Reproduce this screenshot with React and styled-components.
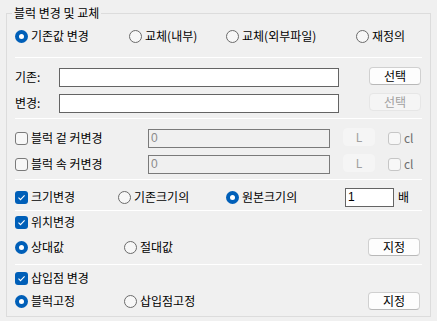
import React from 'react';
import styled, { createGlobalStyle } from 'styled-components';

const GlobalStyle = createGlobalStyle`
  body {
    margin: 0;
    background: #f0f0f0;
    font-family: "Noto Sans CJK KR", "Noto Sans", sans-serif;
    font-size: 12px;
    line-height: 16px;
    color: #000;
  }
`;

const Group = styled.fieldset`
  margin: 5px 6px 0;
  padding: 5px 8px 5px;
  border: 1px solid #dcdcdc;
  min-width: 0;
`;

const Title = styled.legend`
  padding: 0 2px;
  margin-left: -3px;
  line-height: 16px;
`;

const Row = styled.div`
  display: flex;
  align-items: center;
  height: 20px;
  margin-top: ${(p) => p.$mt || 0}px;
`;

const Sep = styled.div`
  height: 1px;
  background: #ffffff;
  margin-top: ${(p) => p.$mt || 0}px;
`;

const Cell = styled.div`
  display: flex;
  align-items: center;
  flex-shrink: 0;
  width: ${(p) => (p.$w ? `${p.$w}px` : 'auto')};
  margin-left: ${(p) => p.$ml || 0}px;
  white-space: nowrap;
`;

const Spacer = styled.div`
  flex: 1;
`;

const Circle = styled.span`
  box-sizing: border-box;
  width: 13px;
  height: 13px;
  border-radius: 50%;
  margin-right: 3px;
  flex-shrink: 0;
  display: flex;
  align-items: center;
  justify-content: center;
  border: ${(p) => (p.$on ? 'none' : '1px solid #6b6b6b')};
  background: ${(p) => (p.$on ? '#005fb8' : '#f7f7f7')};

  &::after {
    content: '';
    display: ${(p) => (p.$on ? 'block' : 'none')};
    width: 5px;
    height: 5px;
    border-radius: 50%;
    background: #fff;
  }
`;

const Box = styled.span`
  box-sizing: border-box;
  width: 13px;
  height: 13px;
  border-radius: 3px;
  margin-right: 3px;
  flex-shrink: 0;
  display: flex;
  align-items: center;
  justify-content: center;
  border: ${(p) => (p.$on ? 'none' : `1px solid ${p.$off ? '#c6c6c6' : '#7a7a7a'}`)};
  background: ${(p) => (p.$on ? '#005fb8' : '#f7f7f7')};
`;

const Label = styled.span`
  color: ${(p) => (p.$off ? '#6d6d6d' : '#000')};
`;

const Field = styled.input`
  box-sizing: border-box;
  width: ${(p) => p.$w}px;
  height: 19px;
  margin: 0 0 0 ${(p) => p.$ml || 0}px;
  padding: 0 2px;
  border: 1px solid ${(p) => (p.disabled ? '#7a7a7a' : '#646464')};
  border-radius: 0;
  background: ${(p) => (p.disabled ? '#f0f0f0' : '#fff')};
  color: ${(p) => (p.disabled ? '#8a8a8a' : '#000')};
  font-family: "Liberation Sans", "Noto Sans", sans-serif;
  font-size: 12px;
  outline: none;
`;

const Button = styled.button`
  box-sizing: border-box;
  width: ${(p) => p.$w}px;
  height: 18px;
  margin: 0 ${(p) => p.$mr || 0}px ${(p) => p.$raise || 0}px ${(p) => p.$ml || 0}px;
  padding: 0;
  border-radius: 4px;
  border: 1px solid ${(p) => (p.disabled ? (p.$flat ? '#f5f5f5' : '#e6e6e6') : '#d0d0d0')};
  border-bottom-color: ${(p) => (p.disabled ? (p.$flat ? '#f5f5f5' : '#e6e6e6') : '#b8b8b8')};
  background: ${(p) => (p.disabled ? '#f5f5f5' : '#fdfdfd')};
  color: ${(p) => (p.disabled ? '#a0a0a0' : '#000')};
  font-family: "Noto Sans CJK KR", "Noto Sans", sans-serif;
  font-size: 12px;
  line-height: 16px;
`;

const Check = () => (
  <svg width="9" height="9" viewBox="0 0 9 9">
    <polyline points="1.5,4.6 3.5,6.6 7.6,2.4" fill="none" stroke="#fff" strokeWidth="1.1" />
  </svg>
);

const Radio = ({ on, children }) => (
  <>
    <Circle $on={on} />
    <Label>{children}</Label>
  </>
);

const CheckBox = ({ on, off, children }) => (
  <>
    <Box $on={on} $off={off}>{on && <Check />}</Box>
    <Label $off={off}>{children}</Label>
  </>
);

export default function App() {
  return (
    <>
      <GlobalStyle />
      <Group>
        <Title>블럭 변경 및 교체</Title>

        <Row>
          <Cell $w={114}><Radio on>기존값 변경</Radio></Cell>
          <Cell $w={97}><Radio>교체(내부)</Radio></Cell>
          <Cell $w={130}><Radio>교체(외부파일)</Radio></Cell>
          <Cell><Radio>재정의</Radio></Cell>
        </Row>

        <Sep $mt={11} />

        <Row $mt={9}>
          <Cell $w={44}>기존:</Cell>
          <Field $w={280} readOnly value="" />
          <Button $w={52} $ml={30} $raise={3}>선택</Button>
        </Row>
        <Row $mt={6}>
          <Cell $w={44}>변경:</Cell>
          <Field $w={280} readOnly value="" />
          <Button $w={52} $ml={30} $raise={3} disabled>선택</Button>
        </Row>

        <Sep $mt={5} />

        <Row $mt={9}>
          <Cell $w={133}><CheckBox>블럭 겉 커변경</CheckBox></Cell>
          <Field $w={182} disabled value="0" readOnly />
          <Button $w={32} $ml={13} $raise={3} $flat disabled>L</Button>
          <Cell $ml={13}><CheckBox off>cl</CheckBox></Cell>
        </Row>
        <Row $mt={6}>
          <Cell $w={133}><CheckBox>블럭 속 커변경</CheckBox></Cell>
          <Field $w={182} disabled value="0" readOnly />
          <Button $w={32} $ml={13} $raise={3} $flat disabled>L</Button>
          <Cell $ml={13}><CheckBox off>cl</CheckBox></Cell>
        </Row>

        <Sep $mt={5} />

        <Row $mt={7}>
          <Cell $w={103}><CheckBox on>크기변경</CheckBox></Cell>
          <Cell $w={108}><Radio>기존크기의</Radio></Cell>
          <Cell $w={119}><Radio on>원본크기의</Radio></Cell>
          <Field $w={49} readOnly value="1" />
          <Cell $ml={4}>배</Cell>
        </Row>

        <Sep $mt={3} />

        <Row $mt={1}>
          <Cell><CheckBox on>위치변경</CheckBox></Cell>
        </Row>
        <Row $mt={5}>
          <Cell $w={109}><Radio on>상대값</Radio></Cell>
          <Cell><Radio>절대값</Radio></Cell>
          <Spacer />
          <Button $w={52} $mr={2}>지정</Button>
        </Row>

        <Sep $mt={7} />

        <Row $mt={3}>
          <Cell><CheckBox on>삽입점 변경</CheckBox></Cell>
        </Row>
        <Row $mt={3}>
          <Cell $w={109}><Radio on>블럭고정</Radio></Cell>
          <Cell><Radio>삽입점고정</Radio></Cell>
          <Spacer />
          <Button $w={52} $mr={2}>지정</Button>
        </Row>
      </Group>
    </>
  );
}
